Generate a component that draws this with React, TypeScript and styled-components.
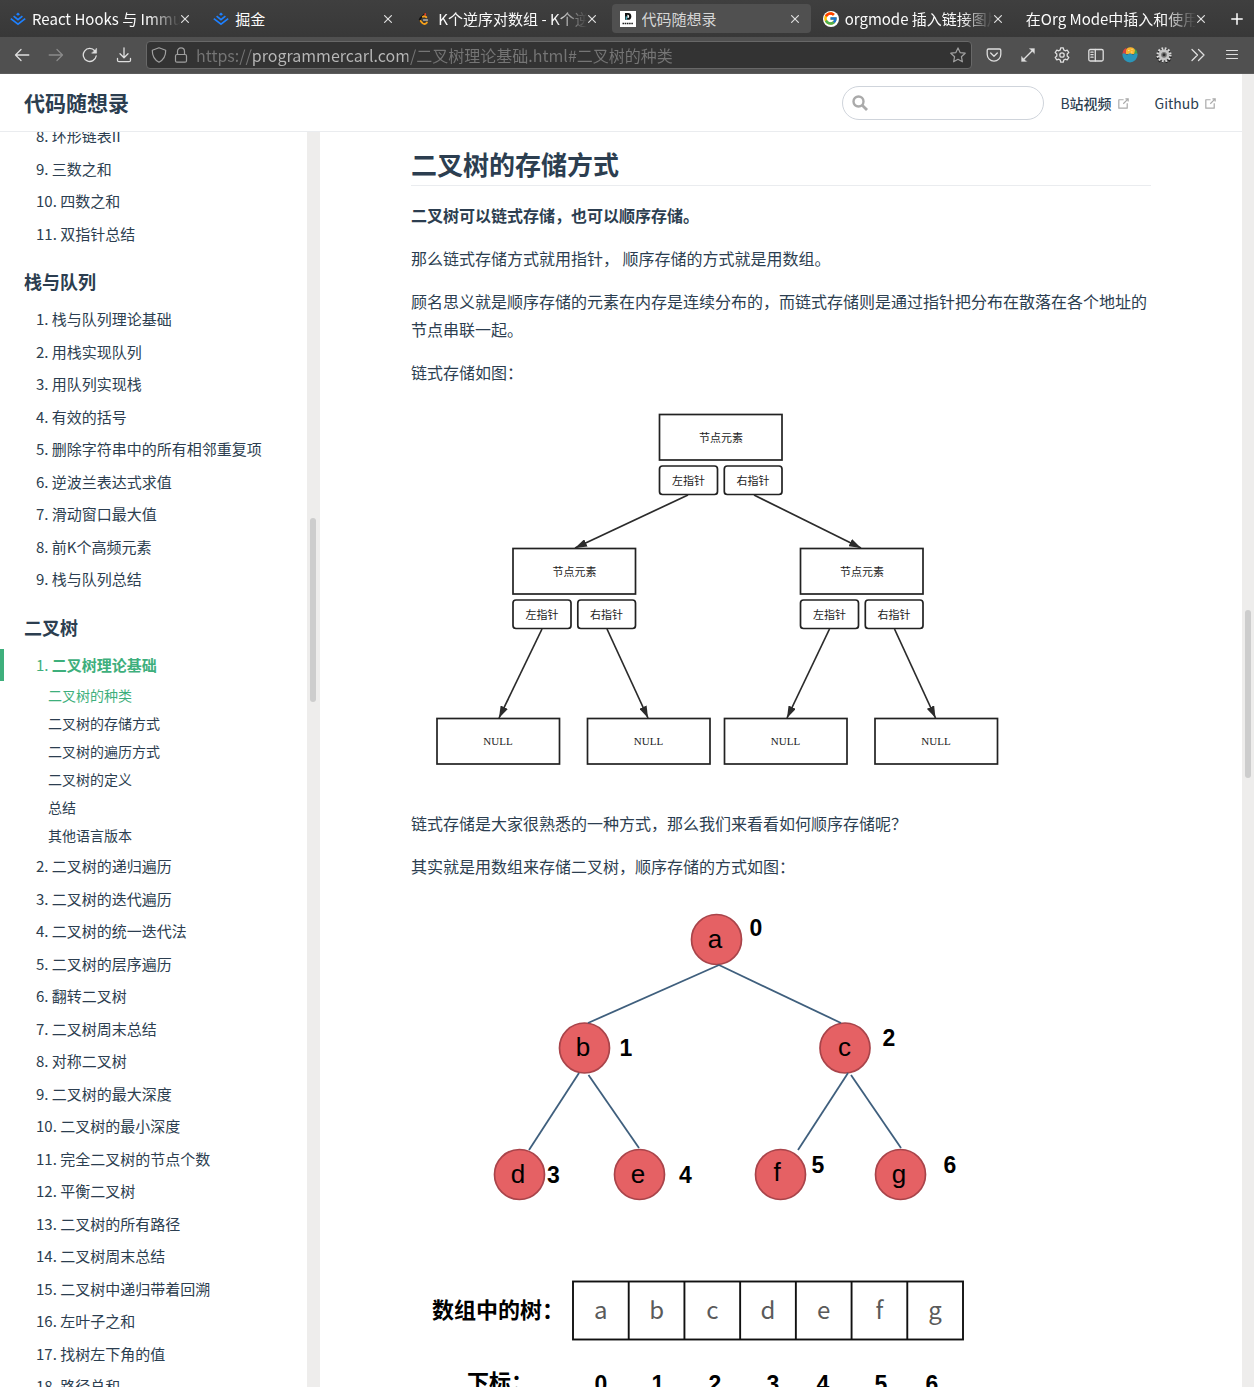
import React from "react";
import styled, { createGlobalStyle, css } from "styled-components";
import { FcGoogle } from "react-icons/fc";

const uiFont = `"Noto Sans CJK SC", "Noto Sans", sans-serif`;

const GlobalStyle = createGlobalStyle`
  *, *::before, *::after { box-sizing: border-box; }
  html, body { margin: 0; padding: 0; }
  body { font-family: ${uiFont}; color: #2c3e50; background: #fff; }
  button, input { font: inherit; }
  ul, ol { list-style: none; margin: 0; padding: 0; }
  svg { display: block; flex: none; }
`;

/* ---------- window ---------- */

const Window = styled.div`
  display: flex;
  flex-direction: column;
  height: 100vh;
  overflow: hidden;
`;

const TabStrip = styled.nav`
  display: flex;
  align-items: center;
  gap: 4px;
  height: 37px;
  flex: none;
  padding: 0 1px 0 2px;
  background: linear-gradient(#3f3f3f, #383838);
  color: #fbfbfb;
`;

const Tab = styled.div<{ $active?: boolean }>`
  display: flex;
  align-items: center;
  gap: 6px;
  flex: 1 1 0;
  min-width: 0;
  height: 29px;
  padding: 0 6px 0 8px;
  border-radius: 4px;
  ${(p) =>
    p.$active &&
    css`
      background: #505050;
      color: #d6d6d6;
    `}
`;

const TabLabel = styled.span<{ $fade?: boolean }>`
  flex: 1;
  min-width: 0;
  overflow: hidden;
  white-space: nowrap;
  font-size: 15px;
  line-height: 24px;
  ${(p) =>
    p.$fade &&
    css`
      mask-image: linear-gradient(to left, transparent, #000 32px);
    `}
`;

const IconButton = styled.button<{ $width?: number; $tone?: string }>`
  display: flex;
  align-items: center;
  justify-content: center;
  flex: none;
  width: ${(p) => p.$width ?? 34}px;
  height: 28px;
  padding: 0;
  border: 0;
  background: none;
  color: ${(p) => p.$tone ?? "#dedede"};
`;

const CloseButton = styled(IconButton)`
  width: 20px;
  height: 20px;
  margin-left: -11px;
`;

const Toolbar = styled.div`
  display: flex;
  align-items: center;
  height: 37px;
  flex: none;
  padding: 0 5px;
  background: #505050;
  border-bottom: 1px solid #5c5c5c;
`;

const AddressBar = styled.form`
  display: flex;
  align-items: center;
  flex: 1;
  min-width: 0;
  height: 28px;
  margin: 0 5px;
  padding-left: 2px;
  border: 1px solid #686868;
  border-radius: 4px;
  background: #333;
`;

const AddressInput = styled.input`
  flex: 1;
  min-width: 0;
  height: 24px;
  margin-left: 4px;
  padding: 0;
  border: 0;
  outline: 0;
  font-size: 16px;
  color: #b5b5b5;
  -webkit-text-fill-color: transparent;
  background: linear-gradient(to right, #757575 55px, #b8b8b8 55px 212px, #757575 212px);
  background-clip: text;
  -webkit-background-clip: text;
`;

/* ---------- page ---------- */

const Viewport = styled.div`
  display: flex;
  flex: 1;
  min-height: 0;
`;

const Page = styled.div`
  display: flex;
  flex-direction: column;
  flex: 1;
  min-width: 0;
`;

const Track = styled.div<{ $width: number; $rows: string }>`
  display: grid;
  grid-template-rows: ${(p) => p.$rows};
  flex: none;
  width: ${(p) => p.$width}px;
  padding: 0 3px;
  background: #eeedec;
`;

const Thumb = styled.div`
  grid-row: 2;
  width: 6px;
  border-radius: 3px;
  background: #cdcdcd;
`;

const Navbar = styled.header`
  display: flex;
  align-items: center;
  flex: none;
  height: 58px;
  padding: 0 24px;
  border-bottom: 1px solid #eaecef;
`;

const SiteName = styled.a`
  margin-right: auto;
  padding-bottom: 2px;
  font-size: 21px;
  line-height: 36px;
  font-weight: 700;
  color: #2c3e50;
  text-decoration: none;
`;

const SearchBox = styled.label`
  display: flex;
  align-items: center;
  gap: 8px;
  width: 202px;
  height: 34px;
  padding: 0 12px 0 9px;
  border: 1px solid #cfd4db;
  border-radius: 17px;
`;

const SearchInput = styled.input`
  flex: 1;
  min-width: 0;
  padding: 0;
  border: 0;
  outline: 0;
  background: none;
  font-size: 14px;
  color: #4e6e8e;
`;

const NavLinks = styled.nav`
  display: flex;
  gap: 24px;
  margin-left: 16px;
`;

const NavLink = styled.a`
  display: flex;
  align-items: center;
  gap: 4px;
  font-size: 14px;
  line-height: 24px;
  color: #2c3e50;
  text-decoration: none;

  svg {
    margin-top: 2px;
  }
`;

const Medium = styled.span`
  font-weight: 500;
`;

const Columns = styled.div`
  display: flex;
  flex: 1;
  min-height: 0;
`;

const Sidebar = styled.aside`
  display: flex;
  flex: none;
  width: 320px;
`;

const SidebarScroll = styled.div`
  flex: 1;
  min-width: 0;
  overflow: hidden;
`;

const SidebarContent = styled.div`
  margin-top: -12px;
`;

const Group = styled.section`
  & + & {
    margin-top: 16px;
  }
`;

const GroupTitle = styled.h2`
  margin: 0;
  padding: 2px 24px 8px;
  font-size: 18px;
  line-height: 1.5;
  font-weight: 700;
`;

const SidebarLink = styled.a<{ $active?: boolean }>`
  display: block;
  padding: 5px 16px 5px 32px;
  border-left: 4px solid ${(p) => (p.$active ? "#3eaf7c" : "transparent")};
  font-size: 15px;
  line-height: 1.5;
  color: ${(p) => (p.$active ? "#3eaf7c" : "#2c3e50")};
  text-decoration: none;
`;

const SubList = styled.ul`
  padding: 0 16px 1px 48px;
`;

const SubLink = styled.a<{ $active?: boolean }>`
  display: block;
  font-size: 14px;
  line-height: 28px;
  color: ${(p) => (p.$active ? "#3eaf7c" : "#2c3e50")};
  text-decoration: none;
`;

const Main = styled.main`
  flex: 1;
  min-width: 0;
  overflow: hidden;
`;

const Article = styled.article`
  max-width: 740px;
  margin: 0 auto;
  padding-top: 16px;
`;

const Heading = styled.h1`
  margin: 0;
  padding-bottom: 5px;
  border-bottom: 1px solid #eaecef;
  font-size: 26px;
  line-height: 32px;
  font-weight: 700;
`;

const Paragraph = styled.p`
  margin: 16px 0;
  font-size: 16px;
  line-height: 1.7;
`;

const Figure = styled.figure`
  margin: 17px 0 15px;

  svg {
    width: 100%;
    height: auto;
  }
`;

/* ---------- icons ---------- */

const stroke = { fill: "none", stroke: "currentColor", strokeLinecap: "round", strokeLinejoin: "round" } as const;

const JuejinIcon = () => (
  <svg width="16" height="16" viewBox="0 0 16 16">
    <path d="M8 1.6 10 3.2 8 4.8 6 3.2Z" fill="#1e80ff" />
    <path d="M3.6 5.2 8 8.7l4.4-3.5M.8 7.6 8 13.2l7.2-5.6" fill="none" stroke="#1e80ff" strokeWidth="1.7" />
  </svg>
);

const LeetCodeIcon = () => (
  <svg width="16" height="16" viewBox="0 0 16 16" fill="none" strokeWidth="1.8" strokeLinecap="round">
    <path d="M9 2.800 4.300 7.400a1.700 1.700 0 0 0 0 2.400" stroke="#111" />
    <path d="m4.500 9.900 2.200 2.500q1.600 1.200 3.300 0l.9-.9" stroke="#f5a01a" />
    <path d="M6.800 5.700q1.600-1.100 3.600.500" stroke="#f5a01a" />
    <path d="M7.500 9h4" stroke="#b3b3b3" strokeWidth="1.300" />
    <path d="M9.200 2.800v1" stroke="#e0442e" />
  </svg>
);

const SiteIcon = () => (
  <svg width="16" height="16" viewBox="0 0 16 16">
    <rect width="16" height="16" fill="#fff" />
    <path d="M5 2h3q3.300 0 3.300 3.400T8 8.800H5Z" fill="#111" />
    <path d="M7.400 3.800h.5q1.200 0 1.200 1.600T7.900 7h-.5Z" fill="#fff" />
    <path d="M5.600 5.400H7.200V8.800H5.600Z" fill="#44a5b5" />
    <path d="M2.500 12.500h11" stroke="#222" strokeWidth="1.600" strokeDasharray="1.600 .6" />
  </svg>
);

const GoogleBadge = styled.span`
  display: flex;
  align-items: center;
  justify-content: center;
  flex: none;
  width: 16px;
  height: 16px;
  border-radius: 50%;
  background: #fff;
`;

const CloseIcon = () => (
  <svg width="8" height="8" viewBox="0 0 8 8" {...stroke} strokeWidth="1.200">
    <path d="m.6.6 6.800 6.800M7.400.6.6 7.400" />
  </svg>
);

const PlusIcon = () => (
  <svg width="12" height="12" viewBox="0 0 12 12" {...stroke} stroke="#fff" strokeWidth="1.500">
    <path d="M6 .8v10.400M.8 6h10.400" />
  </svg>
);

const BackIcon = () => (
  <svg width="16" height="16" viewBox="0 0 16 16" {...stroke} strokeWidth="1.300">
    <path d="M14.800 8H1.500M7 2.500 1.500 8 7 13.500" />
  </svg>
);

const ForwardIcon = () => (
  <svg width="16" height="16" viewBox="0 0 16 16" {...stroke} strokeWidth="1.300">
    <path d="M1.200 8h13.300M9 2.500 14.500 8 9 13.500" />
  </svg>
);

const ReloadIcon = () => (
  <svg width="16" height="16" viewBox="0 0 16 16" {...stroke} strokeWidth="1.300">
    <path d="M14.200 9A6.500 6.500 0 1 1 12.800 3.800" />
    <path d="M14.600 1.500v4.700H9.900Z" fill="currentColor" strokeWidth=".5" />
  </svg>
);

const DownloadIcon = () => (
  <svg width="16" height="16" viewBox="0 0 16 16" {...stroke} strokeWidth="1.300">
    <path d="M8 .8v9.700M4 6.700l4 4 4-4M1.500 11.500v1.700q0 1.500 1.500 1.500h10q1.500 0 1.500-1.500v-1.700" />
  </svg>
);

const ShieldIcon = () => (
  <svg width="16" height="16" viewBox="0 0 16 16" {...stroke} strokeWidth="1.200">
    <path d="M8 .8 14.700 3.200q.2 8.300-6.700 12Q1.100 11.500 1.300 3.200Z" />
  </svg>
);

const LockIcon = () => (
  <svg width="14" height="16" viewBox="0 0 14 16" {...stroke} strokeWidth="1.200">
    <rect x="1.500" y="7.500" width="11" height="7.700" rx="1.500" />
    <path d="M3.500 7.500V4.300a3.500 3.500 0 0 1 7 0v3.200" />
  </svg>
);

const StarIcon = () => (
  <svg width="16" height="16" viewBox="0 0 16 16" {...stroke} strokeWidth="1.200">
    <path d="m8 .9 2.100 4.700 5.100.600-3.800 3.500 1 5.100L8 12.300l-4.400 2.500 1-5.100L.8 6.200l5.100-.600Z" />
  </svg>
);

const PocketIcon = () => (
  <svg width="16" height="16" viewBox="0 0 16 16" {...stroke} strokeWidth="1.300">
    <path d="M2.500 2h11q1.300 0 1.300 1.300v4a6.800 6.800 0 0 1-13.600 0v-4Q1.200 2 2.500 2ZM4.700 6 8 9.200 11.300 6" />
  </svg>
);

const ExpandIcon = () => (
  <svg width="16" height="16" viewBox="0 0 16 16" {...stroke} strokeWidth="1.400">
    <path d="m3 13 10-10" />
    <path d="M9.500 1.500h5v5ZM1.500 9.500v5h5Z" fill="currentColor" strokeWidth=".3" />
  </svg>
);

const GearIcon = () => (
  <svg width="16" height="16" viewBox="0 0 16 16" {...stroke} strokeWidth="1.300">
    <path d="M6.700.9h2.600l.400 2 1.500.900 2-.700 1.600 2.400L13.200 6.900v2.200l1.600 1.400-1.600 2.400-2-.700-1.500.900-.400 2H6.700l-.400-2-1.500-.900-2 .700-1.600-2.400L2.800 9.100V6.900L1.200 5.500l1.600-2.400 2 .700 1.500-.900Z" />
    <circle cx="8" cy="8" r="2.200" />
  </svg>
);

const SidebarIcon = () => (
  <svg width="16" height="16" viewBox="0 0 16 16" {...stroke} strokeWidth="1.300">
    <rect x=".8" y="2.500" width="14.400" height="11.500" rx="1.500" />
    <path d="M7.300 2.500V14M2.900 5.200h2.200M2.900 7.700h2.200M2.900 10.200h2.200" />
  </svg>
);

const BowlIcon = () => (
  <svg width="16" height="16" viewBox="0 0 16 16">
    <path d="M.5 7Q.600 2.500 4 1l4 6Z" fill="#d9453c" />
    <path d="M15.500 7Q15 3 12.500 1.500L9 7Z" fill="#43a047" />
    <path d="M4 7V3.500Q5 .2 8.500.3T13 3.500L12 7Z" fill="#f9b32f" />
    <path d="M6 3.500h1.500M9 5h1.500M9.500 2.500h1" stroke="#fde08a" />
    <path d="M.3 7q1.700-1.400 3.200 0t3 0 3 0 3 0 3.200 0A7.700 8.500 0 0 1 .3 7Z" fill="#2b95b8" />
  </svg>
);

const CogIcon = () => (
  <svg width="16" height="16" viewBox="0 0 16 16">
    <circle cx="8" cy="9" r="6.300" fill="none" stroke="#1e1e1e" strokeWidth="3" strokeDasharray="1.700 1.600" />
    <circle cx="8" cy="7.800" r="6.300" fill="none" stroke="#d8d8d8" strokeWidth="2.600" strokeDasharray="1.700 1.600" />
    <circle cx="8" cy="7.800" r="4.200" fill="#8e8e8e" stroke="#c4c4c4" strokeWidth="2.600" />
    <circle cx="8" cy="7.800" r="2.600" fill="#777" />
    <circle cx="8" cy="7.800" r="1.500" fill="#2e2e2e" />
  </svg>
);

const MoreIcon = () => (
  <svg width="16" height="16" viewBox="0 0 16 16" {...stroke} strokeWidth="1.300">
    <path d="m2 2.500 5.500 5.500L2 13.500M8.500 2.500 14 8l-5.500 5.500" />
  </svg>
);

const MenuIcon = () => (
  <svg width="16" height="16" viewBox="0 0 16 16" {...stroke} strokeWidth="1.200">
    <path d="M2.500 3.500h11M2.500 7.500h11M2.500 11.500h11" />
  </svg>
);

const SearchIcon = () => (
  <svg width="16" height="16" viewBox="0 0 16 16" fill="none" stroke="#aaa" strokeWidth="2.400">
    <circle cx="6.500" cy="6.500" r="5" />
    <path d="m10.200 10.200 4.800 4.800" strokeWidth="2.800" />
  </svg>
);

const OutboundIcon = () => (
  <svg width="15" height="15" viewBox="0 0 100 100" fill="#aaa">
    <path d="M18.800 85.100h56c2.200 0 4-1.800 4-4v-32h-8v28h-48v-48h28v-8h-32c-2.200 0-4 1.800-4 4v56c0 2.200 1.800 4 4 4z" />
    <path d="M45.700 48.700 51.300 54.300 77.200 28.500V37.200H85.200V14.900H62.800V22.900H71.500Z" />
  </svg>
);

/* ---------- diagrams ---------- */

const BoxText = styled.text`
  font-family: "Liberation Serif", "Noto Sans CJK SC", serif;
  font-size: 11px;
  text-anchor: middle;
  fill: #222;
`;

const CircleText = styled.text`
  font-family: "Liberation Sans", Arial, sans-serif;
  font-size: 26px;
  text-anchor: middle;
  fill: #000;
`;

const IndexText = styled.text`
  font-family: "Liberation Sans", Arial, sans-serif;
  font-size: 23px;
  font-weight: 700;
  text-anchor: middle;
  fill: #000;
`;

const CellText = styled.text`
  font-family: ${uiFont};
  font-size: 24px;
  text-anchor: middle;
  fill: #5a5a5a;
`;

const LabelText = styled.text`
  font-family: ${uiFont};
  font-size: 22px;
  font-weight: 700;
  fill: #000;
`;

const linkedNodes = [
  { x: 248.5, y: 11.5 },
  { x: 102, y: 145.5 },
  { x: 389.5, y: 145.5 },
];
const nullBoxes = [26, 176.5, 313.5, 464];
const arrows = [
  [277, 92, 164, 145],
  [343, 92, 450, 145],
  [131, 226, 88, 315],
  [196, 226, 237, 315],
  [418.5, 226, 376, 315],
  [483.5, 226, 524.5, 315],
];

const LinkedDiagram = () => (
  <svg viewBox="0 0 740 391" role="img" aria-label="链式存储">
    <defs>
      <marker id="head" viewBox="0 0 12 8" refX="12" refY="4" markerWidth="12" markerHeight="8" markerUnits="userSpaceOnUse" orient="auto">
        <path d="M0 0 12 4 0 8Z" fill="#2b2b2b" />
      </marker>
    </defs>
    {linkedNodes.map(({ x, y }) => (
      <g key={x} fill="none" stroke="#222" strokeWidth="1.700">
        <rect x={x} y={y} width="122.500" height="45.500" />
        <rect x={x} y={y + 51.5} width="58" height="28.500" rx="3" />
        <rect x={x + 64.8} y={y + 51.5} width="57.700" height="28.500" rx="3" />
        <g stroke="none">
          <BoxText x={x + 61.5} y={y + 27}>节点元素</BoxText>
          <BoxText x={x + 29} y={y + 70}>左指针</BoxText>
          <BoxText x={x + 93.5} y={y + 70}>右指针</BoxText>
        </g>
      </g>
    ))}
    {nullBoxes.map((x) => (
      <g key={x}>
        <rect x={x} y="315.500" width="122.500" height="45.500" fill="none" stroke="#222" strokeWidth="1.700" />
        <BoxText x={x + 61} y="342">NULL</BoxText>
      </g>
    ))}
    {arrows.map(([x1, y1, x2, y2]) => (
      <line key={`${x1}-${x2}`} x1={x1} y1={y1} x2={x2} y2={y2} stroke="#2b2b2b" strokeWidth="1.700" markerEnd="url(#head)" />
    ))}
  </svg>
);

const circles = [
  { name: "a", x: 305.5, y: 42.5, tx: 304, ty: 51 },
  { name: "b", x: 173.5, y: 151, tx: 172, ty: 159 },
  { name: "c", x: 434, y: 151, tx: 433.5, ty: 159 },
  { name: "d", x: 108.5, y: 277.5, tx: 107, ty: 286 },
  { name: "e", x: 228.5, y: 277.5, tx: 227, ty: 286 },
  { name: "f", x: 369.5, y: 277.5, tx: 366, ty: 284 },
  { name: "g", x: 489.5, y: 277.5, tx: 488, ty: 286 },
];
const edges = [
  [308, 68, 177, 126],
  [308, 68, 430, 126],
  [168, 176, 118, 253],
  [177.5, 178, 228, 251],
  [437, 176, 387, 253],
  [440, 178, 490, 251],
];
const treeIndexes = [
  [345, 39],
  [215, 159],
  [478, 149],
  [142.5, 286],
  [274.5, 286],
  [407, 276],
  [539, 276],
];
const arrayIndexes = [190, 247, 304, 362, 412, 470, 521];
const cellWidth = 390 / 7;

const ArrayDiagram = () => (
  <svg viewBox="0 0 740 520" role="img" aria-label="顺序存储">
    {circles.map((c) => (
      <g key={c.name}>
        <circle cx={c.x} cy={c.y} r="25" fill="#e56164" stroke="#a9444a" strokeWidth="1.700" />
        <CircleText x={c.tx} y={c.ty}>{c.name}</CircleText>
      </g>
    ))}
    {edges.map(([x1, y1, x2, y2]) => (
      <line key={`${x1}-${x2}`} x1={x1} y1={y1} x2={x2} y2={y2} stroke="#3f5f7d" strokeWidth="1.800" />
    ))}
    {treeIndexes.map(([x, y], i) => (
      <IndexText key={i} x={x} y={y}>{i}</IndexText>
    ))}
    <LabelText x="21" y="421">数组中的树：</LabelText>
    <rect x="162" y="384.500" width="390" height="58" fill="none" stroke="#111" strokeWidth="1.900" />
    {circles.map((c, i) => (
      <g key={c.name}>
        {i > 0 && (
          <line x1={162 + i * cellWidth} x2={162 + i * cellWidth} y1="384.500" y2="442.500" stroke="#111" strokeWidth="1.900" />
        )}
        <CellText x={162 + (i + 0.5) * cellWidth} y="422">{c.name}</CellText>
      </g>
    ))}
    <LabelText x="56" y="493">下标：</LabelText>
    {arrayIndexes.map((x, i) => (
      <IndexText key={x} x={x} y="495">{i}</IndexText>
    ))}
  </svg>
);

/* ---------- data ---------- */

const tabs = [
  { title: "React Hooks 与 Immu", icon: <JuejinIcon />, fade: true },
  { title: "掘金", icon: <JuejinIcon /> },
  { title: "K个逆序对数组 - K个逆", icon: <LeetCodeIcon />, fade: true },
  { title: "代码随想录", icon: <SiteIcon />, active: true },
  { title: "orgmode 插入链接图片", icon: <GoogleBadge><FcGoogle size={15} /></GoogleBadge>, fade: true },
  { title: "在Org Mode中插入和使用", fade: true },
];

const extensions = [
  { label: "Pocket", icon: <PocketIcon /> },
  { label: "全屏", icon: <ExpandIcon /> },
  { label: "设置", icon: <GearIcon /> },
  { label: "侧栏", icon: <SidebarIcon /> },
  { label: "沙拉查词", icon: <BowlIcon /> },
  { label: "扩展", icon: <CogIcon /> },
  { label: "更多工具", icon: <MoreIcon /> },
  { label: "菜单", icon: <MenuIcon /> },
];

type Item = { title: string; active?: boolean; children?: string[] };

const groups: { title?: string; first: number; items: Item[] }[] = [
  {
    first: 8,
    items: [{ title: "环形链表II" }, { title: "三数之和" }, { title: "四数之和" }, { title: "双指针总结" }],
  },
  {
    title: "栈与队列",
    first: 1,
    items: [
      { title: "栈与队列理论基础" },
      { title: "用栈实现队列" },
      { title: "用队列实现栈" },
      { title: "有效的括号" },
      { title: "删除字符串中的所有相邻重复项" },
      { title: "逆波兰表达式求值" },
      { title: "滑动窗口最大值" },
      { title: "前K个高频元素" },
      { title: "栈与队列总结" },
    ],
  },
  {
    title: "二叉树",
    first: 1,
    items: [
      {
        title: "二叉树理论基础",
        active: true,
        children: ["二叉树的种类", "二叉树的存储方式", "二叉树的遍历方式", "二叉树的定义", "总结", "其他语言版本"],
      },
      { title: "二叉树的递归遍历" },
      { title: "二叉树的迭代遍历" },
      { title: "二叉树的统一迭代法" },
      { title: "二叉树的层序遍历" },
      { title: "翻转二叉树" },
      { title: "二叉树周末总结" },
      { title: "对称二叉树" },
      { title: "二叉树的最大深度" },
      { title: "二叉树的最小深度" },
      { title: "完全二叉树的节点个数" },
      { title: "平衡二叉树" },
      { title: "二叉树的所有路径" },
      { title: "二叉树周末总结" },
      { title: "二叉树中递归带着回溯" },
      { title: "左叶子之和" },
      { title: "找树左下角的值" },
      { title: "路径总和" },
    ],
  },
];

export default function App() {
  return (
    <Window lang="zh-CN">
      <GlobalStyle />
      <TabStrip aria-label="标签页">
        {tabs.map((tab) => (
          <Tab key={tab.title} $active={tab.active}>
            {tab.icon}
            <TabLabel $fade={tab.fade}>{tab.title}</TabLabel>
            <CloseButton type="button" aria-label="关闭标签页">
              <CloseIcon />
            </CloseButton>
          </Tab>
        ))}
        <IconButton type="button" $width={32} aria-label="新标签页">
          <PlusIcon />
        </IconButton>
      </TabStrip>
      <Toolbar>
        <IconButton type="button" aria-label="后退"><BackIcon /></IconButton>
        <IconButton type="button" aria-label="前进" $tone="#8a8a8a"><ForwardIcon /></IconButton>
        <IconButton type="button" aria-label="刷新"><ReloadIcon /></IconButton>
        <IconButton type="button" aria-label="下载"><DownloadIcon /></IconButton>
        <AddressBar onSubmit={(e) => e.preventDefault()}>
          <IconButton type="button" aria-label="跟踪保护" $width={20} $tone="#a0a0a0"><ShieldIcon /></IconButton>
          <IconButton type="button" aria-label="网站信息" $width={23} $tone="#a0a0a0"><LockIcon /></IconButton>
          <AddressInput
            type="text"
            aria-label="地址"
            defaultValue="https://programmercarl.com/二叉树理论基础.html#二叉树的种类"
          />
          <IconButton type="button" aria-label="收藏" $width={26} $tone="#a0a0a0"><StarIcon /></IconButton>
        </AddressBar>
        {extensions.map((item) => (
          <IconButton key={item.label} type="button" aria-label={item.label}>
            {item.icon}
          </IconButton>
        ))}
      </Toolbar>
      <Viewport>
        <Page>
          <Navbar>
            <SiteName href="#home">代码随想录</SiteName>
            <SearchBox>
              <SearchIcon />
              <SearchInput type="text" aria-label="搜索" />
            </SearchBox>
            <NavLinks>
              <NavLink href="#bilibili">
                <span>B<Medium>站视频</Medium></span>
                <OutboundIcon />
              </NavLink>
              <NavLink href="#github">
                <span>Github</span>
                <OutboundIcon />
              </NavLink>
            </NavLinks>
          </Navbar>
          <Columns>
            <Sidebar>
              <SidebarScroll>
                <SidebarContent>
                  {groups.map((group, i) => (
                    <Group key={i}>
                      {group.title && <GroupTitle>{group.title}</GroupTitle>}
                      <ul>
                        {group.items.map((item, n) => (
                          <li key={n}>
                            <SidebarLink href="#page" $active={item.active}>
                              {`${group.first + n}. `}
                              {item.active ? <strong>{item.title}</strong> : item.title}
                            </SidebarLink>
                            {item.children && (
                              <SubList>
                                {item.children.map((child, c) => (
                                  <li key={child}>
                                    <SubLink href="#section" $active={c === 0}>{child}</SubLink>
                                  </li>
                                ))}
                              </SubList>
                            )}
                          </li>
                        ))}
                      </ul>
                    </Group>
                  ))}
                </SidebarContent>
              </SidebarScroll>
              <Track $width={13} $rows="386fr 184fr 685fr"><Thumb /></Track>
            </Sidebar>
            <Main>
              <Article>
                <Heading>二叉树的存储方式</Heading>
                <Paragraph><strong>二叉树可以链式存储，也可以顺序存储。</strong></Paragraph>
                <Paragraph>那么链式存储方式就用指针， 顺序存储的方式就是用数组。</Paragraph>
                <Paragraph>
                  顾名思义就是顺序存储的元素在内存是连续分布的，而链式存储则是通过指针把分布在散落在各个地址的节点串联一起。
                </Paragraph>
                <Paragraph>链式存储如图：</Paragraph>
                <Figure><LinkedDiagram /></Figure>
                <Paragraph>链式存储是大家很熟悉的一种方式，那么我们来看看如何顺序存储呢？</Paragraph>
                <Paragraph>其实就是用数组来存储二叉树，顺序存储的方式如图：</Paragraph>
                <Figure><ArrayDiagram /></Figure>
              </Article>
            </Main>
          </Columns>
        </Page>
        <Track $width={12} $rows="536fr 168fr 609fr"><Thumb /></Track>
      </Viewport>
    </Window>
  );
}
